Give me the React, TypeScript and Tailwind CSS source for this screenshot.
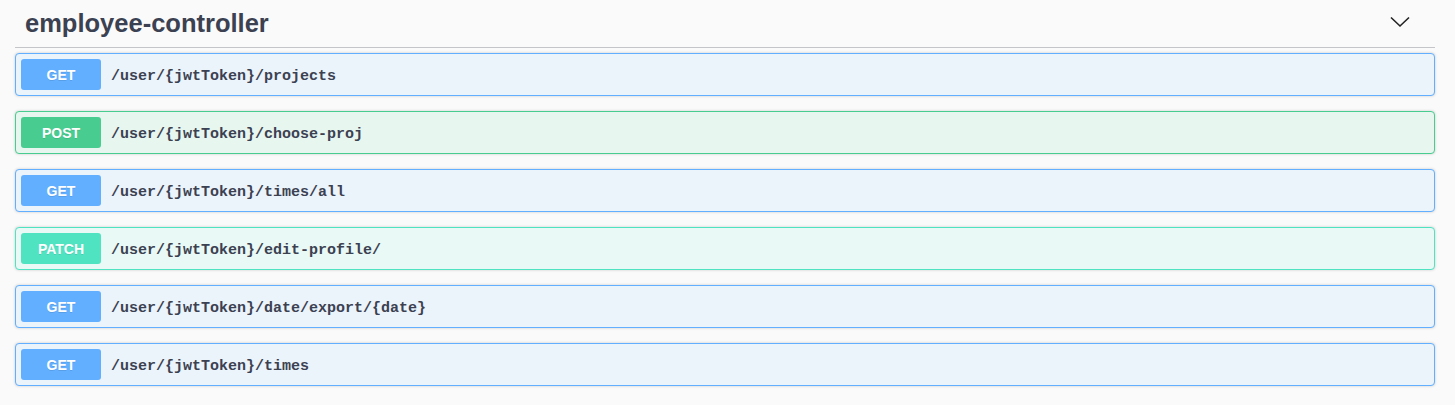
import React from "react";

type Op = { method: string; path: string };

const ops: Op[] = [
  { method: "GET", path: "/user/{jwtToken}/projects" },
  { method: "POST", path: "/user/{jwtToken}/choose-proj" },
  { method: "GET", path: "/user/{jwtToken}/times/all" },
  { method: "PATCH", path: "/user/{jwtToken}/edit-profile/" },
  { method: "GET", path: "/user/{jwtToken}/date/export/{date}" },
  { method: "GET", path: "/user/{jwtToken}/times" },
];

function Row({ op }: { op: Op }) {
  const styles =
    op.method === "GET"
      ? { row: "bg-[#ebf3fb] border-[#61affe]", badge: "bg-[#61affe]" }
      : op.method === "POST"
      ? { row: "bg-[#e8f6f0] border-[#49cc90]", badge: "bg-[#49cc90]" }
      : { row: "bg-[#e9f9f5] border-[#50e3c2]", badge: "bg-[#50e3c2]" };
  return (
    <div
      className={`flex items-center h-[43px] border rounded-[4px] px-[5px] shadow-[0_0_3px_rgba(0,0,0,0.19)] ${styles.row}`}
    >
      <div
        className={`w-[80px] h-[31px] pt-[2px] flex items-center justify-center rounded-[3px] text-white text-[14px] font-bold [text-shadow:0_1px_0_rgba(0,0,0,0.1)] ${styles.badge}`}
        style={{ fontFamily: '"Liberation Sans", Arial, sans-serif' }}
      >
        {op.method}
      </div>
      <div
        className="ml-[10px] pt-[5px] text-[15px] font-bold text-[#3b4151]"
        style={{ fontFamily: '"Liberation Mono", "DejaVu Sans Mono", monospace' }}
      >
        {op.path}
      </div>
    </div>
  );
}

export default function App() {
  return (
    <div className="w-[1455px] h-[405px] bg-[#fafafa] overflow-hidden">
      <div className="ml-[15px] mr-[20px]">
        <div className="flex items-center justify-between h-[48px] border-b border-[#c4c5c9] pl-[10px] pr-[25px]">
          <h4
            className="text-[25.5px] font-bold text-[#3b4151] leading-none mt-[1px]"
            style={{ fontFamily: '"Liberation Sans", Arial, sans-serif' }}
          >
            employee-controller
          </h4>
          <svg width="20" height="12" viewBox="0 0 20 12" className="-mt-[4px]">
            <path d="M1 1.5 L10 10 L19 1.5" fill="none" stroke="#222" strokeWidth="1.6" />
          </svg>
        </div>
        <div className="flex flex-col gap-[15px] mt-[5px]">
          {ops.map((op, i) => (
            <Row key={i} op={op} />
          ))}
        </div>
      </div>
    </div>
  );
}
